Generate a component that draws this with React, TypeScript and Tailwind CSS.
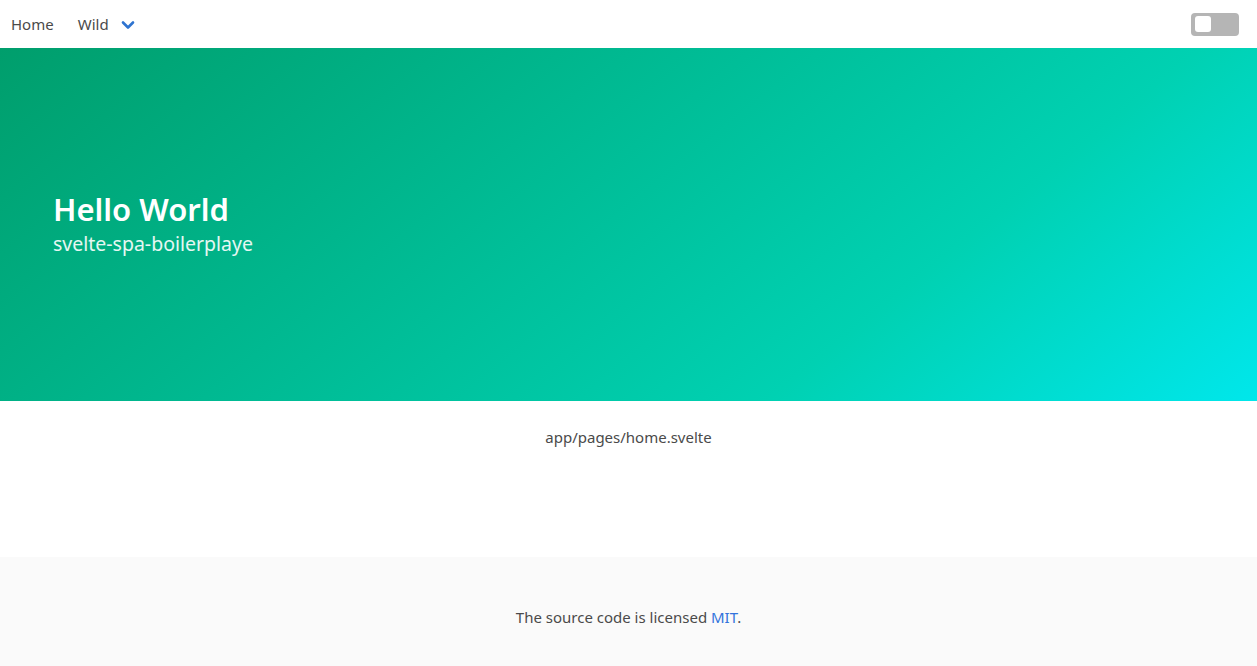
export default function App() {
  return (
    <div className="min-h-screen bg-white text-[#4a4a4a]" style={{ fontFamily: '"Noto Sans", "Open Sans", sans-serif' }}>
      {/* Navbar */}
      <nav className="flex h-12 items-center justify-between bg-white">
        <div className="flex items-center">
          <a className="pl-[11px] pr-[12px] text-[15px] leading-6">Home</a>
          <a className="flex items-center gap-[12px] pl-[12px] text-[15px] leading-6">
            Wild
            <svg width="14" height="10" viewBox="0 0 14 10" className="mt-0.5">
              <path d="M2 2.5 L7 7.5 L12 2.5" fill="none" stroke="#2f74d0" strokeWidth="2.6" strokeLinecap="round" strokeLinejoin="round" />
            </svg>
          </a>
        </div>
        <div className="mr-[18px] flex h-[23px] w-12 items-center rounded-[4px] bg-[#b5b5b5] px-1">
          <div className="h-4 w-4 rounded-[3px] bg-white" />
        </div>
      </nav>

      {/* Hero */}
      <section className="flex h-[353px] flex-col justify-center bg-[linear-gradient(141deg,#009e6c_0%,#00d1b2_71%,#00e7eb_100%)] px-[53px] pb-[4px]">
        <h1 className="text-[31px] font-semibold leading-[40px] text-white">Hello World</h1>
        <h2 className="mt-[3px] text-[19.5px] leading-6 text-white/90">svelte-spa-boilerplaye</h2>
      </section>

      {/* Content */}
      <section className="h-[156px] pt-6 text-center">
        <p className="text-[15px] leading-6">app/pages/home.svelte</p>
      </section>

      {/* Footer */}
      <footer className="bg-[#fafafa] pb-[37px] pt-12 text-center">
        <p className="text-[15px] leading-6">
          The source code is licensed <a className="text-[#3273dc]">MIT</a>.
        </p>
      </footer>
    </div>
  )
}
